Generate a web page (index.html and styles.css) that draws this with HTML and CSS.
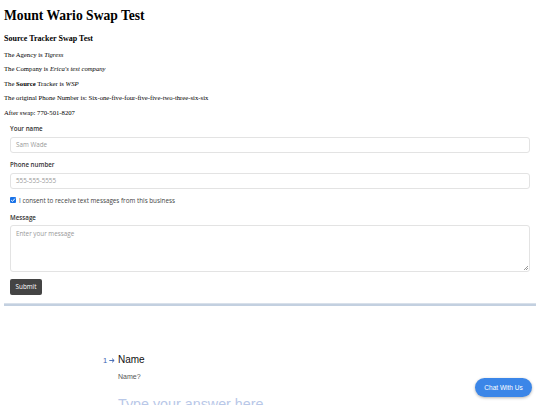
FILE: index.html
```html
<!DOCTYPE html>
<html>
<head>
<meta charset="utf-8">
<link rel="stylesheet" href="styles.css">
</head>
<body>
<h1 class="title">Mount Wario Swap Test</h1>
<h3 class="subtitle">Source Tracker Swap Test</h3>
<p class="line">The Agency is <em>Tigress</em></p>
<p class="line">The Company is <em>Erica's test company</em></p>
<p class="line">The <strong>Source</strong> Tracker is <em>WSP</em></p>
<p class="line">The original Phone Number is: Six-one-five-four-five-five-two-three-six-six</p>
<p class="line">After swap: 770-501-8207</p>
<form class="form">
  <label class="label">Your name</label>
  <div class="input">Sam Wade</div>
  <label class="label">Phone number</label>
  <div class="input">555-555-5555</div>
  <div class="consent"><span class="check"><svg width="6" height="6" viewBox="0 0 6 6"><path d="M1.2 3.1 L2.5 4.4 L4.9 1.6" stroke="#fff" stroke-width="1" fill="none"/></svg></span>I consent to receive text messages from this business</div>
  <label class="label">Message</label>
  <div class="textarea">Enter your message<span class="grip"></span></div>
  <div class="submit">Submit</div>
</form>
<div class="divider"></div>
<section class="tf">
  <div class="q">
    <span class="num">1<svg class="arrow" width="6" height="5" viewBox="0 0 6 5"><path d="M0.3 2.5 H5 M3 0.6 L5.2 2.5 L3 4.4" stroke="#3a62b0" stroke-width="0.9" fill="none"/></svg></span>
    <div class="qbody">
      <div class="qtitle">Name</div>
      <div class="qdesc">Name?</div>
      <div class="answer">Type your answer here</div>
    </div>
  </div>
</section>
<div class="chat">Chat With Us</div>
</body>
</html>
```
FILE: styles.css
```css
html, body { margin: 0; padding: 0; background: #fff; overflow: hidden; }
body { padding: 0 4px; font-family: "Liberation Serif", serif; color: #000; height: 405px; position: relative; }
.title { font-size: 13.6px; line-height: 16px; margin: 8px 0 0; font-weight: bold; }
.subtitle { font-size: 8px; line-height: 10px; margin: 10px 0 0; font-weight: bold; }
.line { font-size: 6.7px; line-height: 8px; margin: 6.6px 0 0; }
.line em { font-style: italic; }
.form { margin: 7px 0 0; padding: 0 6px; font-family: "Open Sans", sans-serif; display: flex; flex-direction: column; }
.label { font-size: 6.2px; font-weight: 600; color: #333; line-height: 9px; margin-top: 0; }
.input { margin-top: 4px; height: 16px; border: 1px solid #e3e3e3; border-radius: 3px; box-sizing: border-box; font-size: 6.3px; color: #999; display: flex; align-items: center; padding-left: 5px; margin-bottom: 7px; }
.consent { display: flex; align-items: center; font-size: 6.3px; color: #444; margin: 0 0 8px; line-height: 9px; }
.check { width: 6px; height: 6px; background: #1a73e8; border-radius: 1px; margin-right: 3px; display: inline-flex; }
.textarea { margin-top: 3px; height: 47px; border: 1px solid #e3e3e3; border-radius: 3px; box-sizing: border-box; font-size: 6.3px; color: #999; padding: 3px 5px; position: relative; }
.grip { position: absolute; right: 1px; bottom: 1px; width: 4px; height: 4px; background: linear-gradient(135deg, transparent 45%, #999 45%, #999 55%, transparent 55%, transparent 70%, #999 70%, #999 80%, transparent 80%); }
.submit { margin-top: 7px; width: 32px; height: 16px; background: #444; border-radius: 2px; color: #fff; font-size: 6.3px; display: flex; align-items: center; justify-content: center; box-sizing: border-box; }
.divider { margin-top: 8px; height: 2px; background: #c3d0e0; border-top: 0.5px solid #d8e0ea; }
.tf { font-family: "Liberation Sans", sans-serif; padding: 48px 0 0 99px; }
.q { display: flex; }
.num { font-size: 7.5px; color: #3a62b0; width: 15px; margin-top: 2px; display: flex; align-items: center; height: 10px; }
.arrow { margin-left: 2px; }
.qtitle { font-size: 10px; line-height: 12px; color: #111; }
.qdesc { font-size: 7px; line-height: 10px; color: #555; margin-top: 6px; }
.answer { font-size: 14.3px; color: #b9c8e8; margin-top: 14px; line-height: 17px; }
.chat { position: absolute; left: 475px; top: 378px; width: 57px; height: 19px; border-radius: 10px; background: #3b86e8; color: #fff; font-family: "Liberation Sans", sans-serif; font-size: 6.5px; display: flex; align-items: center; justify-content: center; box-shadow: 0 1px 3px rgba(0,0,0,0.3); }
```
